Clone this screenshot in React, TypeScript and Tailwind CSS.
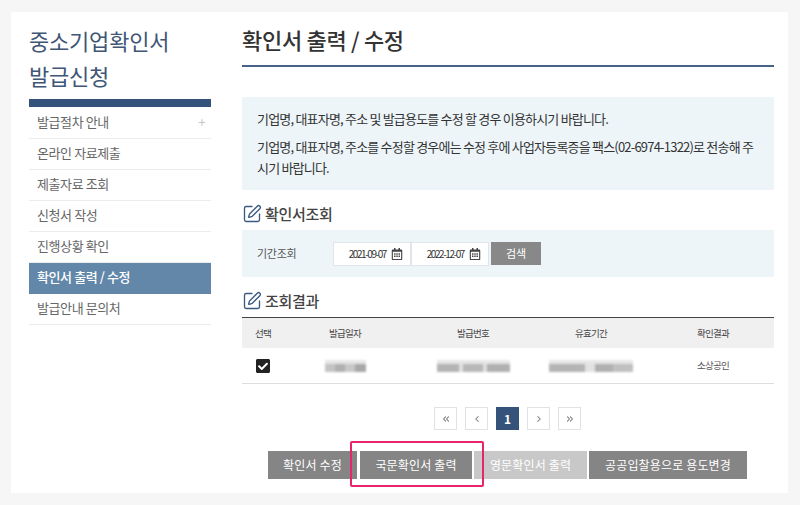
import { SquarePen, ChevronLeft, ChevronRight, ChevronsLeft, ChevronsRight } from "lucide-react";
import { FaCheckSquare, FaRegCalendarAlt } from "react-icons/fa";

const font = { fontFamily: '"Noto Sans CJK KR", "Noto Sans", sans-serif' };

const menu = [
  { label: "발급절차 안내", plus: true },
  { label: "온라인 자료제출" },
  { label: "제출자료 조회" },
  { label: "신청서 작성" },
  { label: "진행상황 확인" },
  { label: "확인서 출력 / 수정", active: true },
  { label: "발급안내 문의처" },
];

function SectionTitle({ children }: { children: string }) {
  return (
    <div className="flex items-center gap-[3px] h-[20px]">
      <SquarePen size={20} strokeWidth={1.6} className="text-[#3c5a80]" />
      <h3 className="text-[15px] font-medium tracking-[-0.3px] text-[#444]">{children}</h3>
    </div>
  );
}

function DateField({ value }: { value: string }) {
  return (
    <div className="w-[78px] h-[24px] flex items-center justify-end gap-[5px] pr-[7px] bg-white border border-[#dfe5ea] text-[10px] tracking-[-1.4px] text-[#333]">
      <span>{value}</span>
      <FaRegCalendarAlt size={12} className="text-[#444]" />
    </div>
  );
}

// 개인정보 가림 처리된 값
function Blurred({ blocks }: { blocks: { w: number; c: string }[] }) {
  return (
    <div className="flex justify-center blur-[1.2px]">
      {blocks.map((b, i) => (
        <div key={i} className="h-[12px] flex flex-col justify-end" style={{ width: b.w, backgroundColor: "#e6e6e6" }}>
          <div className="h-[8px]" style={{ backgroundColor: b.c }} />
        </div>
      ))}
    </div>
  );
}

function PageButton({ children, active }: { children: React.ReactNode; active?: boolean }) {
  return (
    <div
      className={`w-[23px] h-[23px] flex items-center justify-center border text-[12px] font-bold ${
        active ? "bg-[#34527a] border-[#34527a] text-white" : "bg-white border-[#e2e2e2] text-[#777]"
      }`}
    >
      {children}
    </div>
  );
}

export default function App() {
  return (
    <div className="w-[800px] h-[505px] bg-[#f6f6f6] pt-[12px] pl-[11px] overflow-hidden" style={font}>
      <div className="relative w-[777px] h-[481px] bg-white flex">
        <aside className="w-[182px] ml-[18px] shrink-0">
          <h2 className="mt-[11px] text-[22px] leading-[35px] tracking-[-0.2px] text-[#3f5675]">
            중소기업확인서
            <br />
            발급신청
          </h2>
          <div className="h-[8px] mt-[6px] bg-[#34527a]" />
          <ul className="mt-[1px]">
            {menu.map((item) => (
              <li
                key={item.label}
                className={`h-[31px] flex items-center justify-between pl-[8px] pr-[6px] pb-[3px] text-[13px] tracking-[-0.4px] ${
                  item.active
                    ? "bg-[#6287a9] text-white font-medium"
                    : "border-b border-[#ececec] text-[#666]"
                }`}
              >
                <span>{item.label}</span>
                {item.plus && <span className="text-[13px] text-[#c4c4c4]">+</span>}
              </li>
            ))}
          </ul>
        </aside>

        <main className="w-[532px] ml-[31px] shrink-0">
          <h1 className="mt-[10px] h-[43px] text-[22px] leading-[34px] font-medium tracking-[-0.3px] text-[#333]">
            확인서 출력 / 수정
          </h1>
          <div className="h-[2px] bg-[#466387]" />

          <div className="mt-[30px] h-[93px] bg-[#edf5f9] px-[15px] pt-[11px] text-[13px] leading-[21px] tracking-[-0.8px] text-[#333]">
            <p>기업명, 대표자명, 주소 및 발급용도를 수정 할 경우 이용하시기 바랍니다.</p>
            <p className="mt-[7px]">
              기업명, 대표자명, 주소를 수정할 경우에는 수정 후에 사업자등록증을 팩스(02-6974-1322)로 전송해 주시기 바랍니다.
            </p>
          </div>

          <div className="mt-[14px]">
            <SectionTitle>확인서조회</SectionTitle>
          </div>
          <div className="mt-[6px] h-[47px] bg-[#edf5f9] flex items-center pl-[15px]">
            <span className="w-[76px] text-[11px] tracking-[-0.3px] text-[#555]">기간조회</span>
            <DateField value="2021-09-07" />
            <DateField value="2022-12-07" />
            <button className="ml-[2px] w-[50px] h-[23px] bg-[#888] text-white text-[11px]">검색</button>
          </div>

          <div className="mt-[14px]">
            <SectionTitle>조회결과</SectionTitle>
          </div>
          <div className="mt-[6px] border-t border-[#444]">
            <div className="grid grid-cols-[42px_122px_134px_102px_132px] h-[30px] items-center bg-[#f0f0f0] text-[9.5px] tracking-[-0.8px] text-[#444] text-center">
              <span>선택</span>
              <span>발급일자</span>
              <span>발급번호</span>
              <span>유효기간</span>
              <span className="pl-[10px]">확인결과</span>
            </div>
            <div className="grid grid-cols-[42px_122px_134px_102px_132px] h-[36px] items-center border-b border-[#dedede] text-[9.5px] tracking-[-0.8px] text-[#555] text-center">
              <div className="flex justify-center">
                <FaCheckSquare size={16} className="text-[#222]" />
              </div>
              <Blurred
                blocks={[
                  { w: 10, c: "#c4c4c4" },
                  { w: 10, c: "#b0b0b0" },
                  { w: 10, c: "#c8c8c8" },
                  { w: 11, c: "#a8a8a8" },
                ]}
              />
              <Blurred
                blocks={[
                  { w: 22, c: "#b4b4b4" },
                  { w: 4, c: "#e0e0e0" },
                  { w: 20, c: "#b8b8b8" },
                  { w: 4, c: "#dedede" },
                  { w: 23, c: "#b0b0b0" },
                ]}
              />
              <Blurred
                blocks={[
                  { w: 36, c: "#b4b4b4" },
                  { w: 10, c: "#e2e2e2" },
                  { w: 18, c: "#b0b0b0" },
                  { w: 20, c: "#c0c0c0" },
                ]}
              />
              <span className="pl-[10px]">소상공인</span>
            </div>
          </div>

          <div className="mt-[23px] flex justify-center gap-[8px] pr-[1px]">
            <PageButton>
              <ChevronsLeft size={10} strokeWidth={2.5} />
            </PageButton>
            <PageButton>
              <ChevronLeft size={10} strokeWidth={2.5} />
            </PageButton>
            <PageButton active>1</PageButton>
            <PageButton>
              <ChevronRight size={10} strokeWidth={2.5} />
            </PageButton>
            <PageButton>
              <ChevronsRight size={10} strokeWidth={2.5} />
            </PageButton>
          </div>

          <div className="mt-[21px] ml-[26px] flex gap-[2px] text-[12px] tracking-[0.15px] text-white">
            <button className="w-[89px] h-[28px] bg-[#858585]">확인서 수정</button>
            <button className="ml-[1px] w-[112px] h-[28px] bg-[#858585]">국문확인서 출력</button>
            <button className="w-[113px] h-[28px] bg-[#c8c8c8]">영문확인서 출력</button>
            <button className="w-[158px] h-[28px] bg-[#858585]">공공입찰용으로 용도변경</button>
          </div>
        </main>

        {/* 강조 표시 */}
        <div className="absolute left-[339px] top-[429px] w-[134px] h-[46px] border-2 border-[#e8256b] rounded-[2px]" />
      </div>
    </div>
  );
}
